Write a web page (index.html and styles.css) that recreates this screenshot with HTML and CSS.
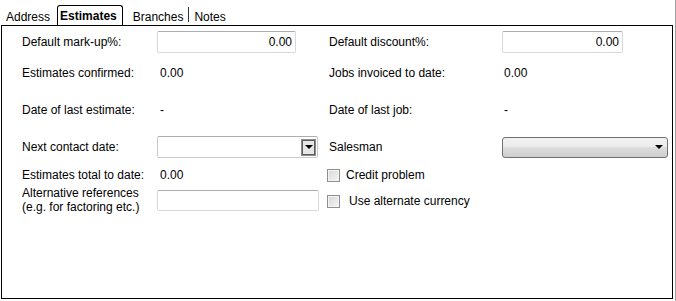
FILE: index.html
```html
<!DOCTYPE html>
<html lang="en">
<head>
    <meta charset="UTF-8">
    <title>Customer - Estimates</title>
    <link rel="stylesheet" href="styles.css">
</head>
<body>
    <div class="window">
        <div class="tabs">
            <span class="tab">Address</span>
            <span class="tab active">Estimates</span>
            <span class="tab">Branches</span>
            <span class="tab-sep"></span>
            <span class="tab">Notes</span>
        </div>
        <div class="panel">
            <div class="form">
                <label class="lbl">Default mark-up%:</label>
                <div class="cell"><input class="text-input num markup" type="text" value="0.00"></div>
                <label class="lbl">Default discount%:</label>
                <div class="cell"><input class="text-input num discount" type="text" value="0.00"></div>

                <span class="lbl">Estimates confirmed:</span>
                <span class="val">0.00</span>
                <span class="lbl">Jobs invoiced to date:</span>
                <span class="val right">0.00</span>

                <span class="lbl">Date of last estimate:</span>
                <span class="val">-</span>
                <span class="lbl">Date of last job:</span>
                <span class="val right">-</span>

                <label class="lbl">Next contact date:</label>
                <div class="cell">
                    <div class="date-picker">
                        <span class="drop-btn"><span class="arrow"></span></span>
                    </div>
                </div>
                <label class="lbl">Salesman</label>
                <div class="cell">
                    <div class="select"><span class="arrow"></span></div>
                </div>

                <span class="lbl">Estimates total to date:</span>
                <span class="val">0.00</span>
                <label class="check wide">
                    <span class="box"></span>
                    <span>Credit problem</span>
                </label>

                <label class="lbl two-line">Alternative references<br>(e.g. for factoring etc.)</label>
                <div class="cell"><input class="text-input alt-ref" type="text"></div>
                <label class="check wide alt">
                    <span class="box"></span>
                    <span>Use alternate currency</span>
                </label>
            </div>
        </div>
    </div>
</body>
</html>
```

FILE: styles.css
```css
* {
    margin: 0;
    padding: 0;
    box-sizing: border-box;
}

body {
    font-family: 'Liberation Sans', Arial, sans-serif;
    font-size: 12px;
    color: #000;
    background: #fff;
}

.window {
    width: 676px;
    height: 301px;
    border-right: 1px solid #a0a0a0;
    display: flex;
    flex-direction: column;
}

/* tab strip */
.tabs {
    display: flex;
    align-items: flex-end;
    height: 25px;
    padding-left: 6px;
}

.tab {
    height: 20px;
    line-height: 18px;
    padding-top: 2px;
    margin-bottom: -1px;
}

.tab.active {
    position: relative;
    background: #fff;
    font-weight: bold;
    border: 1px solid #000;
    border-bottom: none;
    border-radius: 3px 3px 0 0;
    padding: 1px 5px 0 2px;
    line-height: 19px;
    margin: 0 10px 0 7px;
}

.tab-sep {
    width: 1px;
    height: 15px;
    background: #333;
    margin: 0 5px 3px 5px;
}

.panel {
    height: 274px;
    margin: 0 2px 0 1px;
    border: 1px solid #000;
    padding: 5px 0 0 20px;
}

/* form grid */
.form {
    display: grid;
    grid-template-columns: 135px 172px 173px 166px;
    grid-template-rows: 22px 40px 34px 40px 16px 34px;
    align-items: center;
}

.lbl {
    line-height: 14px;
}

.val {
    padding-left: 3px;
}

.val.right {
    padding-left: 2px;
}

.cell {
    display: flex;
    align-items: center;
}

.text-input {
    height: 22px;
    border: 1px solid #d5d8dd;
    border-top-color: #abadb3;
    border-radius: 2px;
    font-family: inherit;
    font-size: 12px;
    color: #000;
    background: #fff;
    padding: 0 3px;
    outline: none;
}

.num {
    text-align: right;
}

.markup {
    width: 139px;
}

.discount {
    width: 121px;
}

.alt-ref {
    width: 162px;
    height: 21px;
}

.date-picker {
    width: 161px;
    height: 22px;
    border: 1px solid #c6c9ce;
    border-top-color: #abadb3;
    border-radius: 2px;
    display: flex;
    justify-content: flex-end;
    align-items: center;
    padding-right: 1px;
}

.drop-btn {
    width: 15px;
    height: 17px;
    border: 1px solid #8c8c8c;
    box-shadow: inset 0 0 0 1px #5e5e5e;
    background: #e6e6e6;
    display: flex;
    justify-content: center;
    align-items: center;
}

.arrow {
    width: 0;
    height: 0;
    border-left: 4px solid transparent;
    border-right: 4px solid transparent;
    border-top: 4px solid #000;
}

.select {
    width: 166px;
    height: 21px;
    border: 1px solid #707070;
    border-radius: 3px;
    background: linear-gradient(#f2f2f2 0%, #ebebeb 50%, #dddddd 50%, #cfcfcf 100%);
    display: flex;
    justify-content: flex-end;
    align-items: center;
    padding-right: 4px;
}

.check {
    display: flex;
    align-items: center;
    gap: 6px;
    margin-left: -2px;
}

.check.wide {
    grid-column: span 2;
}

.check.alt {
    gap: 9px;
    margin-top: 2px;
}

.box {
    width: 13px;
    height: 13px;
    border: 1px solid #8e8f8f;
    box-shadow: inset 0 0 0 1px #f4f4f4;
    background: linear-gradient(135deg, #d6d6d6, #f6f6f6);
}
```
